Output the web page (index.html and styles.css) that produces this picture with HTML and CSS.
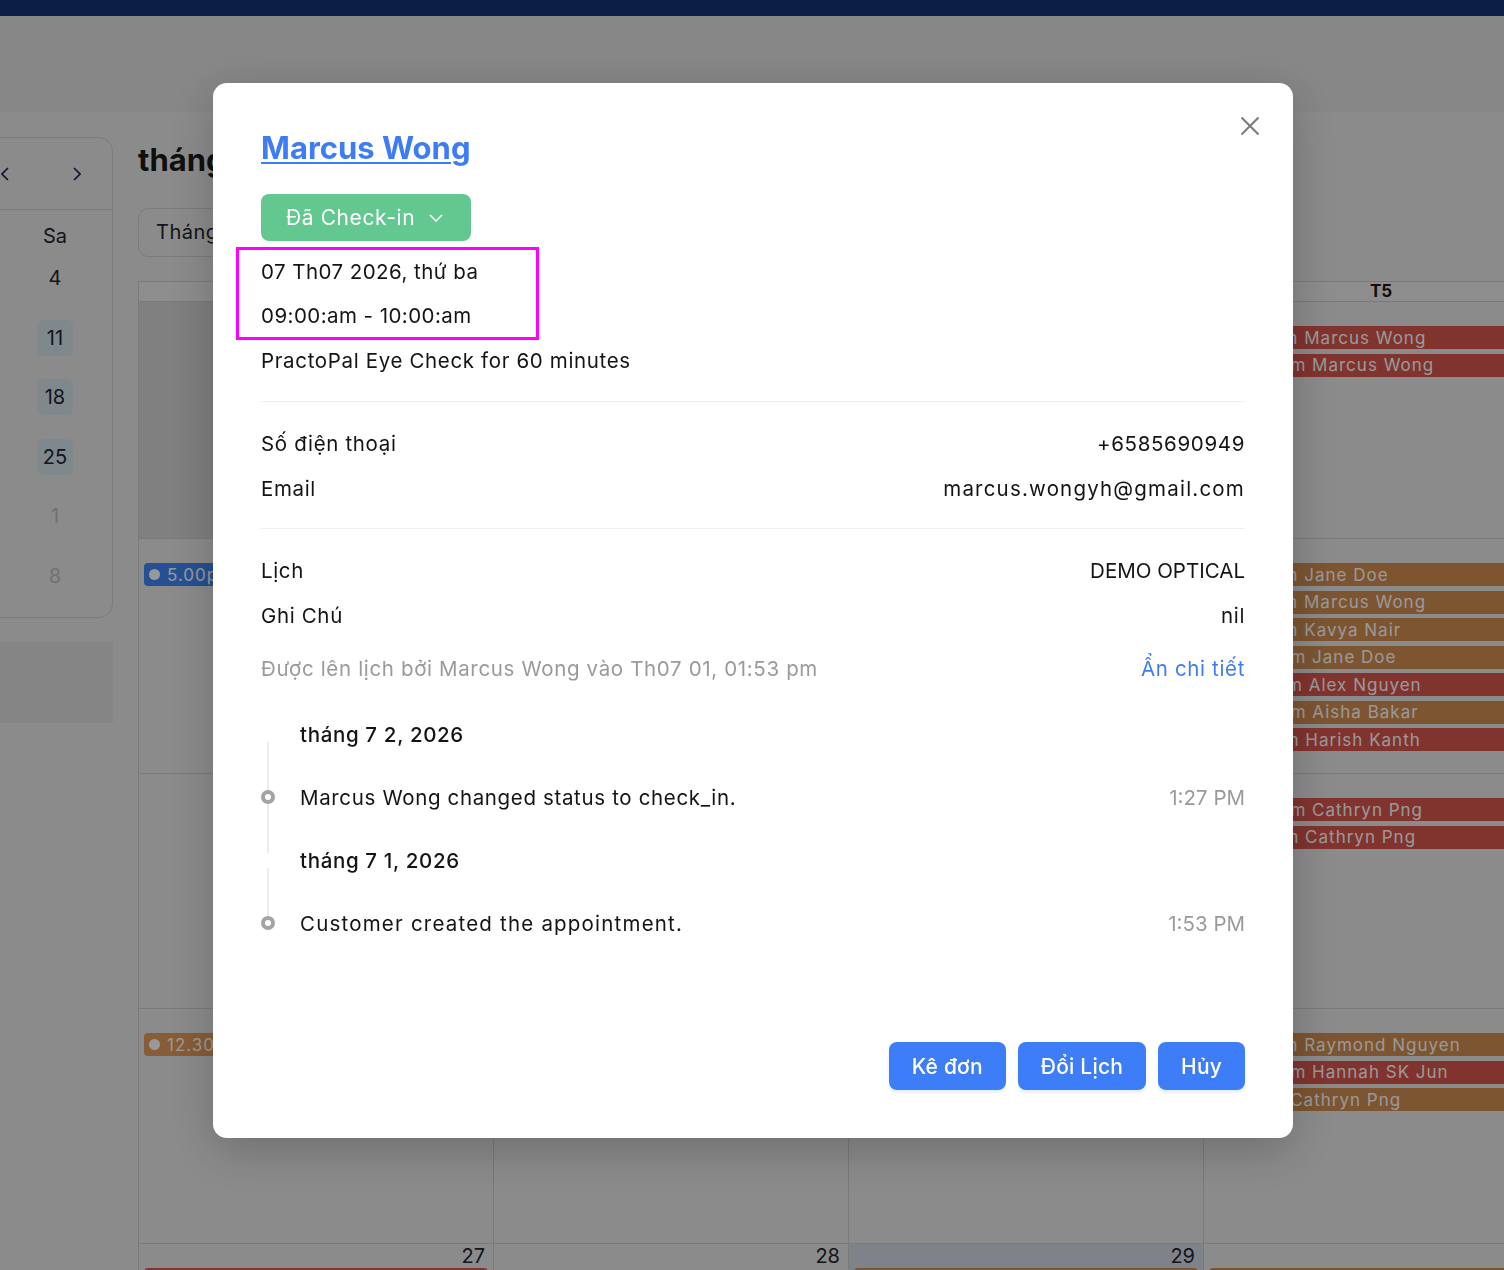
FILE: index.html
```html
<!DOCTYPE html>
<html lang="vi">
<head>
<meta charset="utf-8">
<title>Lịch hẹn</title>
<link rel="stylesheet" href="styles.css">
</head>
<body>
<div class="topbar"></div>
<div class="pagehead"></div>
<div class="main">
  <aside class="side">
    <div class="mini">
      <div class="mini-head">
        <span class="mini-title">Tháng 7 2026</span>
        <span class="mini-nav">
          <svg class="chev" viewBox="0 0 8 14"><path d="M7 1L1 7l6 6"/></svg>
          <svg class="chev" viewBox="0 0 8 14"><path d="M1 1l6 6-6 6"/></svg>
        </span>
      </div>
      <div class="mini-body">
        <div class="mini-week"><span>Su</span><span>Mo</span><span>Tu</span><span>We</span><span>Th</span><span>Fr</span><span>Sa</span></div>
        <div class="mini-days">
          <span class="off">28</span><span class="off">29</span><span class="off">30</span><span>1</span><span>2</span><span>3</span><span>4</span>
          <span>5</span><span>6</span><span>7</span><span>8</span><span>9</span><span>10</span><span class="mark">11</span>
          <span>12</span><span>13</span><span>14</span><span>15</span><span>16</span><span>17</span><span class="mark">18</span>
          <span>19</span><span>20</span><span>21</span><span>22</span><span>23</span><span>24</span><span class="mark">25</span>
          <span>26</span><span>27</span><span>28</span><span>29</span><span>30</span><span>31</span><span class="off">1</span>
          <span class="off">2</span><span class="off">3</span><span class="off">4</span><span class="off">5</span><span class="off">6</span><span class="off">7</span><span class="off">8</span>
        </div>
      </div>
    </div>
    <div class="side-block"></div>
  </aside>

  <section class="cal">
    <h1 class="cal-title">tháng 7 2026</h1>
    <div class="view-select">Tháng</div>
    <div class="grid">
      <div class="hcell">T2</div><div class="hcell">T3</div><div class="hcell">T4</div><div class="hcell">T5</div><div class="hcell">T6</div><div class="hcell">T7</div><div class="hcell">CN</div>

      <div class="cell first other"><div class="num">29</div></div>
      <div class="cell first other"><div class="num">30</div></div>
      <div class="cell first"><div class="num">1</div></div>
      <div class="cell first"><div class="num">2</div>
        <div class="ev red"><i></i>9.00am Marcus Wong</div>
        <div class="ev red"><i></i>10.30am Marcus Wong</div>
      </div>
      <div class="cell first"><div class="num">3</div></div>
      <div class="cell first"><div class="num">4</div></div>
      <div class="cell first"><div class="num">5</div></div>

      <div class="cell"><div class="num">6</div>
        <div class="ev blue"><i></i>5.00pm Daniel Tan</div>
      </div>
      <div class="cell"><div class="num">7</div></div>
      <div class="cell"><div class="num">8</div></div>
      <div class="cell"><div class="num">9</div>
        <div class="ev orange"><i></i>9.00am Jane Doe</div>
        <div class="ev orange"><i></i>9.30am Marcus Wong</div>
        <div class="ev orange"><i></i>9.00am Kavya Nair</div>
        <div class="ev orange"><i></i>10.30am Jane Doe</div>
        <div class="ev red"><i></i>11.30am Alex Nguyen</div>
        <div class="ev orange"><i></i>10.00am Aisha Bakar</div>
        <div class="ev red"><i></i>2.00pm Harish Kanth</div>
      </div>
      <div class="cell"><div class="num">10</div></div>
      <div class="cell"><div class="num">11</div></div>
      <div class="cell"><div class="num">12</div></div>

      <div class="cell"><div class="num">13</div></div>
      <div class="cell"><div class="num">14</div></div>
      <div class="cell"><div class="num">15</div></div>
      <div class="cell"><div class="num">16</div>
        <div class="ev red"><i></i>10.30am Cathryn Png</div>
        <div class="ev red"><i></i>3.00pm Cathryn Png</div>
      </div>
      <div class="cell"><div class="num">17</div></div>
      <div class="cell"><div class="num">18</div></div>
      <div class="cell"><div class="num">19</div></div>

      <div class="cell"><div class="num">20</div>
        <div class="ev amber"><i></i>12.30pm Kavya Nair</div>
      </div>
      <div class="cell"><div class="num">21</div></div>
      <div class="cell"><div class="num">22</div></div>
      <div class="cell"><div class="num">23</div>
        <div class="ev orange"><i></i>9.00am Raymond Nguyen</div>
        <div class="ev red"><i></i>10.30am Hannah SK Jun</div>
        <div class="ev orange"><i></i>1.0pm Cathryn Png</div>
      </div>
      <div class="cell"><div class="num">24</div></div>
      <div class="cell"><div class="num">25</div></div>
      <div class="cell"><div class="num">26</div></div>

      <div class="cell"><div class="num">27</div>
        <div class="ev red"><i></i>9.00am Jane Doe</div>
      </div>
      <div class="cell"><div class="num">28</div></div>
      <div class="cell today"><div class="num">29</div>
        <div class="ev orange"><i></i>9.00am Alex Nguyen</div>
      </div>
      <div class="cell"><div class="num">30</div>
        <div class="ev orange"><i></i>9.00am Aisha Bakar</div>
      </div>
      <div class="cell"><div class="num">31</div></div>
      <div class="cell other"><div class="num">1</div></div>
      <div class="cell other"><div class="num">2</div></div>
    </div>
  </section>
</div>

<div class="overlay"></div>
<div class="modal-layer">
  <div class="modal" role="dialog" aria-label="Chi tiết lịch hẹn">
    <button class="close" aria-label="Đóng">
      <svg viewBox="0 0 20 20"><path d="M1.5 1.5l17 17M18.5 1.5l-17 17"/></svg>
    </button>
    <h2 class="patient"><a href="#">Marcus Wong</a></h2>
    <button class="status">Đã Check-in
      <svg class="status-chev" viewBox="0 0 14 8"><path d="M1 1l6 6 6-6"/></svg>
    </button>
    <div class="when">
      <div class="line">07 Th07 2026, thứ ba</div>
      <div class="line">09:00:am - 10:00:am</div>
    </div>
    <div class="service">PractoPal Eye Check for 60 minutes</div>

    <div class="section">
      <div class="kv"><span>Số điện thoại</span><span>+6585690949</span></div>
      <div class="kv"><span>Email</span><span class="wide">marcus.wongyh@gmail.com</span></div>
    </div>

    <div class="section second">
      <div class="kv"><span>Lịch</span><span class="caps">DEMO OPTICAL</span></div>
      <div class="kv"><span>Ghi Chú</span><span>nil</span></div>
      <div class="kv meta"><span>Được lên lịch bởi Marcus Wong vào Th07 01, 01:53 pm</span><a href="#" class="toggle">Ẩn chi tiết</a></div>
    </div>

    <div class="timeline">
      <div class="tl-group">
        <div class="tl-date">tháng 7 2, 2026</div>
        <div class="tl-item"><span class="dot"></span><span class="tl-text">Marcus Wong changed status to check_in.</span><span class="tl-time">1:27 PM</span></div>
      </div>
      <div class="tl-group">
        <div class="tl-date">tháng 7 1, 2026</div>
        <div class="tl-item"><span class="dot"></span><span class="tl-text wide">Customer created the appointment.</span><span class="tl-time">1:53 PM</span></div>
      </div>
    </div>

    <div class="actions">
      <button class="btn">Kê đơn</button>
      <button class="btn">Đổi Lịch</button>
      <button class="btn">Hủy</button>
    </div>
  </div>
</div>
</body>
</html>
```

FILE: styles.css
```css
* { box-sizing: border-box; }
html, body { margin: 0; }
body {
  width: 1504px;
  height: 1270px;
  overflow: hidden;
  font-family: Inter, "Noto Sans", sans-serif;
  background: #e8e8e8;
  color: #23232f;
}

/* ---------- background page ---------- */
.topbar { height: 16px; background: #143271; }
.pagehead { height: 96px; background: #e1e1e1; }

.main {
  display: flex;
  gap: 25px;
  padding-top: 25px;
  margin-left: -457px;
}

.side { flex: none; width: 570px; }
.mini { border: 1px solid #cfcfcf; border-radius: 14px; padding-bottom: 23.5px; }
.mini-head {
  height: 72px;
  border-bottom: 1px solid #cfcfcf;
  display: flex;
  align-items: center;
  justify-content: space-between;
  padding: 0 31px 0 24px;
  font-size: 20px;
  font-weight: 600;
}
.mini-nav { display: flex; gap: 64px; }
.chev { width: 8px; height: 14px; fill: none; stroke: #1d1d4a; stroke-width: 1.6; }
.mini-body { padding-top: 8px; }
.mini-week, .mini-days {
  display: grid;
  grid-template-columns: repeat(7, 36px);
  column-gap: 40px;
  padding: 0 41px 0 37px;
  font-size: 20px;
}
.mini-week { height: 36px; line-height: 36px; margin-bottom: 6px; text-align: center; }
.mini-days { row-gap: 23.5px; }
.mini-days span {
  height: 36px;
  line-height: 36px;
  text-align: center;
  border-radius: 6px;
}
.mini-days .off { color: #bdbdbd; }
.mini-days .mark { background: #d3e3ec; }
.side-block { margin-top: 24px; height: 81px; background: #dedede; }

.cal { flex: none; width: 2486px; }
.cal-title { margin: 0; font-size: 31px; font-weight: 700; line-height: 46px; color: #1a1a1a; }
.view-select {
  margin-top: 25px;
  width: 170px;
  height: 49px;
  border: 1px solid #cdcdcd;
  border-radius: 10px;
  padding-left: 17px;
  line-height: 47px;
  font-size: 20px;
  letter-spacing: 0.5px;
}
.grid {
  margin-top: 24px;
  display: grid;
  grid-template-columns: repeat(7, 355px);
  border-left: 1px solid #cbcbcb;
  border-top: 1px solid #cbcbcb;
}
.hcell {
  height: 20px;
  line-height: 19px;
  text-align: center;
  font-size: 17px;
  font-weight: 700;
  background: #ebebeb;
  border-right: 1px solid #cbcbcb;
  border-bottom: 1px solid #cbcbcb;
  color: #1a1a1a;
}
.cell {
  height: 235px;
  border-right: 1px solid #cbcbcb;
  border-bottom: 1px solid #cbcbcb;
  overflow: hidden;
}
.cell.first { height: 237px; }
.cell.other { background: #d5d5d5; }
.cell.today { background: #d3dbe6; }
.num {
  height: 24px;
  line-height: 24px;
  text-align: right;
  padding-right: 8px;
  font-size: 20px;
}
.ev {
  display: flex;
  align-items: center;
  gap: 7px;
  margin: 0 5px 4.5px;
  height: 23px;
  padding-left: 5px;
  border-radius: 4px;
  color: #fff;
  font-size: 17px;
  letter-spacing: 1px;
  white-space: nowrap;
  overflow: hidden;
}
.ev i { flex: none; width: 11px; height: 11px; border-radius: 50%; background: #fff; }
.ev.red { background: #d8564e; }
.ev.orange { background: #d08e52; }
.ev.amber { background: #e39a5a; }
.ev.blue { background: #3f86f5; }

/* ---------- modal ---------- */
.overlay { position: fixed; inset: 0; background: rgba(0, 0, 0, 0.4); }
.modal-layer {
  position: fixed;
  inset: 0;
  display: flex;
  justify-content: center;
  align-items: flex-start;
  padding: 83px 0 0 2px;
}
.modal {
  position: relative;
  width: 1080px;
  background: #fff;
  border-radius: 14px;
  padding: 42px 48px 48px;
  box-shadow: 0 12px 48px rgba(0, 0, 0, 0.22);
  color: #141414;
  font-size: 20.5px;
  letter-spacing: 0.65px;
}
.close {
  position: absolute;
  top: 33px;
  right: 33px;
  width: 20px;
  height: 20px;
  padding: 0;
  border: 0;
  background: none;
}
.close svg { display: block; width: 20px; height: 20px; fill: none; stroke: #7a7a7a; stroke-width: 2; }

.patient { margin: 0; line-height: 46px; font-size: 31px; font-weight: 700; letter-spacing: 0; }
.patient a {
  color: #3e7cf6;
  text-decoration: underline;
  text-decoration-thickness: 2px;
  text-underline-offset: 3px;
}
.status {
  display: flex;
  align-items: center;
  gap: 14px;
  margin-top: 23px;
  width: 210px;
  height: 47px;
  padding: 0 0 0 25px;
  border: 0;
  border-radius: 8px;
  background: #62c890;
  color: #fff;
  font-family: inherit;
  font-size: 21px;
  letter-spacing: 0.6px;
}
.status-chev { width: 14px; height: 8px; fill: none; stroke: #fff; stroke-width: 1.5; }

.when {
  margin: 6px 0 0 -25px;
  width: 303px;
  padding-left: 22px;
  border: 3px solid #ff00ff;
}
.when .line { line-height: 43.5px; letter-spacing: 0.45px; }
.service { line-height: 42px; }

.section {
  margin-top: 19px;
  border-top: 1px solid #efefef;
  padding: 19px 0 17px;
}
.section.second { margin-top: 0; padding: 18.5px 0 0; }
.kv { display: flex; justify-content: space-between; line-height: 45px; }
.kv.meta { margin-top: 8px; color: #9a9a9a; }
.wide { letter-spacing: 1.2px; }
.caps { letter-spacing: 0; }
.toggle { color: #3e7cf6; text-decoration: none; }

.timeline { margin-top: 12px; }
.tl-group { position: relative; }
.tl-group::before {
  content: "";
  position: absolute;
  left: 6px;
  top: 39.5px;
  width: 2px;
  height: 111px;
  background: #ececec;
}
.tl-group:last-child::before { height: 48px; }
.tl-date {
  height: 63px;
  display: flex;
  align-items: center;
  padding-left: 39px;
  font-weight: 500;
}
.tl-item { height: 63px; display: flex; align-items: center; position: relative; }
.dot {
  flex: none;
  width: 14px;
  height: 14px;
  border-radius: 50%;
  border: 4px solid #a3a3a3;
  background: #fff;
}
.tl-text { margin-left: 25px; }
.tl-time { margin-left: auto; color: #9a9a9a; letter-spacing: 0; }

.actions { display: flex; justify-content: flex-end; gap: 12px; margin-top: 87.5px; }
.btn {
  height: 48px;
  padding: 0 23px;
  border: 0;
  border-radius: 8px;
  background: #3d7df7;
  color: #fff;
  font-family: inherit;
  font-size: 21px;
  font-weight: 500;
  letter-spacing: 0.2px;
  box-shadow: 0 3px 3px rgba(61, 125, 247, 0.12);
}
```
